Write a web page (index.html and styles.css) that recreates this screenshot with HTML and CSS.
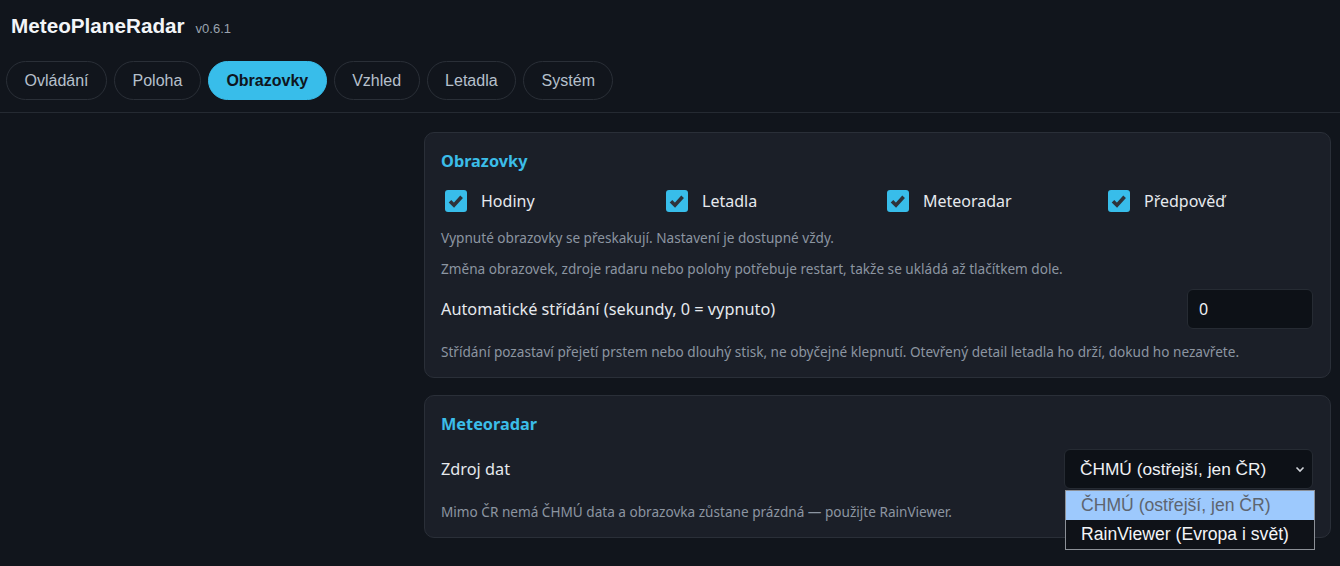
FILE: index.html
```html
<!DOCTYPE html>
<html lang="cs">
<head>
  <meta charset="UTF-8" />
  <meta name="viewport" content="width=device-width, initial-scale=1.0"/>
  <title>MeteoPlaneRadar</title>
  <link rel="stylesheet" href="styles.css">
</head>
<body>

  <!-- Top bar with app name and tabs -->
  <header class="topbar">
    <div class="brand">
      <h1>MeteoPlaneRadar</h1>
      <span class="version">v0.6.1</span>
    </div>
    <nav class="tabs">
      <a href="#" class="tab">Ovládání</a>
      <a href="#" class="tab">Poloha</a>
      <a href="#" class="tab active">Obrazovky</a>
      <a href="#" class="tab">Vzhled</a>
      <a href="#" class="tab">Letadla</a>
      <a href="#" class="tab">Systém</a>
    </nav>
  </header>

  <main class="layout">
    <aside class="side"></aside>

    <div class="cards">
      <!-- Screens card -->
      <section class="card">
        <h2 class="card-title">Obrazovky</h2>
        <div class="check-grid">
          <label class="check"><span class="box"><svg viewBox="0 0 22 22"><path d="M5 11.2l4 4 7.6-8.4"/></svg></span>Hodiny</label>
          <label class="check"><span class="box"><svg viewBox="0 0 22 22"><path d="M5 11.2l4 4 7.6-8.4"/></svg></span>Letadla</label>
          <label class="check"><span class="box"><svg viewBox="0 0 22 22"><path d="M5 11.2l4 4 7.6-8.4"/></svg></span>Meteoradar</label>
          <label class="check"><span class="box"><svg viewBox="0 0 22 22"><path d="M5 11.2l4 4 7.6-8.4"/></svg></span>Předpověď</label>
        </div>
        <p class="hint hint-first">Vypnuté obrazovky se přeskakují. Nastavení je dostupné vždy.</p>
        <p class="hint hint-second">Změna obrazovek, zdroje radaru nebo polohy potřebuje restart, takže se ukládá až tlačítkem dole.</p>
        <div class="setting">
          <span class="setting-label">Automatické střídání (sekundy, 0 = vypnuto)</span>
          <input class="num-input" type="text" value="0">
        </div>
        <p class="hint">Střídání pozastaví přejetí prstem nebo dlouhý stisk, ne obyčejné klepnutí. Otevřený detail letadla ho drží, dokud ho nezavřete.</p>
      </section>

      <!-- Radar card -->
      <section class="card">
        <h2 class="card-title">Meteoradar</h2>
        <div class="setting setting-select">
          <span class="setting-label">Zdroj dat</span>
          <div class="select">
            <span>ČHMÚ (ostřejší, jen ČR)</span>
            <svg class="chevron" viewBox="0 0 12 12"><path d="M2.5 4.5l3.5 3.5 3.5-3.5"/></svg>
            <!-- open dropdown list -->
            <ul class="options">
              <li class="option selected">ČHMÚ (ostřejší, jen ČR)</li>
              <li class="option">RainViewer (Evropa i svět)</li>
            </ul>
          </div>
        </div>
        <p class="hint">Mimo ČR nemá ČHMÚ data a obrazovka zůstane prázdná — použijte RainViewer.</p>
      </section>
    </div>
  </main>

</body>
</html>
```

FILE: styles.css
```css
/* Page base */
body {
  margin: 0;
  padding: 0;
  background-color: #11151c;
  color: #e6e9ee;
  font-family: "Liberation Sans", Arial, sans-serif;
}

/* Top bar */
.topbar {
  padding: 14px 6px 12px;
  border-bottom: 1px solid #252a32;
}

.brand {
  display: flex;
  align-items: baseline;
  padding-left: 5px;
}

.brand h1 {
  margin: 0;
  font-size: 20.7px;
  line-height: 23px;
  font-weight: bold;
  color: #f3f5f8;
}

.version {
  margin-left: 11px;
  font-size: 13px;
  color: #9aa3ae;
}

.tabs {
  display: flex;
  gap: 7px;
  margin-top: 24px;
}

.tab {
  display: inline-block;
  padding: 10px 17.5px;
  line-height: 17px;
  font-size: 16px;
  color: #b6c0cc;
  text-decoration: none;
  border: 1px solid #2a2f37;
  border-radius: 20px;
}

.tab.active {
  background-color: #38bdea;
  border-color: #38bdea;
  color: #0e1520;
  font-weight: bold;
}

/* Main layout */
.layout {
  display: grid;
  grid-template-columns: 416px 1fr;
  padding: 19px 9px 40px 8px;
}

.cards {
  display: flex;
  flex-direction: column;
  gap: 17px;
}

.card {
  background-color: #1b1f28;
  border: 1px solid #2a2f38;
  border-radius: 10px;
  padding: 18px 16px 15px;
  font-family: "Noto Sans", "Open Sans", sans-serif;
}

.card-title {
  margin: 0;
  font-size: 16.3px;
  line-height: 20px;
  font-weight: bold;
  color: #3bbde8;
}

/* Checkbox grid */
.check-grid {
  display: grid;
  grid-template-columns: 221px 221px 221px 1fr;
  margin-top: 18px;
}

.check {
  display: flex;
  align-items: center;
  height: 24px;
  font-size: 16px;
  color: #e6e9ee;
}

.box {
  width: 22px;
  height: 22px;
  margin-left: 4px;
  margin-right: 14px;
  border-radius: 3px;
  background-color: #38bdea;
}

.box svg {
  display: block;
  width: 22px;
  height: 22px;
}

.box path {
  fill: none;
  stroke: #2f333a;
  stroke-width: 3.6;
}

/* Hints */
.hint {
  margin: 13px 0 0;
  font-size: 13.6px;
  line-height: 20px;
  color: #8c95a1;
}

.hint.hint-first {
  margin-top: 15px;
}

.hint.hint-second {
  margin-top: 11px;
}

/* Setting rows */
.setting {
  display: flex;
  justify-content: space-between;
  align-items: center;
  margin-top: 10px;
}

.setting-select {
  margin-top: 15px;
}

.setting-label {
  font-size: 16.3px;
  color: #e6e9ee;
}

.num-input {
  box-sizing: border-box;
  width: 126px;
  height: 40px;
  margin-right: 1px;
  padding: 0 11px;
  background-color: #0d1117;
  border: 1px solid #262b33;
  border-radius: 6px;
  color: #f0f2f5;
  font-family: "Noto Sans", sans-serif;
  font-size: 16px;
}

/* Fake select with open list */
.select {
  position: relative;
  box-sizing: border-box;
  display: flex;
  align-items: center;
  justify-content: space-between;
  width: 249px;
  height: 40px;
  margin-right: 1px;
  padding: 0 6px 0 15px;
  background-color: #0d1117;
  border: 1px solid #262b33;
  border-radius: 6px;
  font-family: "Liberation Sans", Arial, sans-serif;
  font-size: 17.3px;
  color: #f0f2f5;
}

.chevron {
  width: 12px;
  height: 12px;
}

.chevron path {
  fill: none;
  stroke: #d0d4da;
  stroke-width: 1.6;
}

.options {
  position: absolute;
  top: 40px;
  left: 0;
  z-index: 5;
  width: 250px;
  box-sizing: border-box;
  margin: 0;
  padding: 0;
  list-style: none;
  border: 1px solid #8c9097;
  background-color: #0f1218;
  font-size: 17.6px;
}

.option {
  height: 29px;
  line-height: 29px;
  padding-left: 15px;
  color: #f3f5f8;
}

.option.selected {
  background-color: #9dc9fd;
  color: #5d6570;
}
```
